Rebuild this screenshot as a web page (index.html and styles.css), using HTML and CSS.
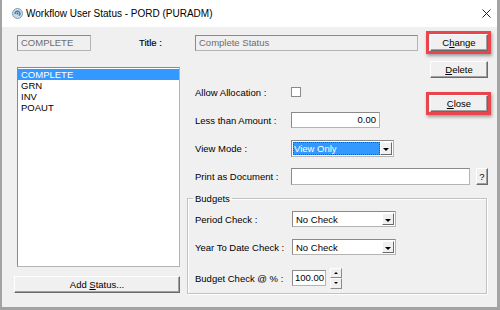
FILE: index.html
```html
<!DOCTYPE html>
<html lang="en">
<head>
    <meta charset="UTF-8">
    <title>Workflow User Status - PORD (PURADM)</title>
    <link rel="stylesheet" href="styles.css">
</head>
<body>

    <div class="window">
        <div class="titlebar">
            <svg class="app-icon" width="11" height="11" viewBox="0 0 11 11">
                <circle cx="5.5" cy="5.5" r="5" fill="#c9dbe8" stroke="#7e9cb4" stroke-width="1"/>
                <path d="M3.2 6.2 A2.4 2.4 0 1 1 6.8 7.6" fill="none" stroke="#3f6f98" stroke-width="1.2"/>
                <circle cx="5.5" cy="5.5" r="1" fill="#3f6f98"/>
            </svg>
            <span class="caption">Workflow User Status - PORD (PURADM)</span>
            <svg class="close-x" width="9" height="9" viewBox="0 0 9 9">
                <path d="M0.5 0.5 L8.5 8.5 M8.5 0.5 L0.5 8.5" stroke="#222" stroke-width="1"/>
            </svg>
        </div>

        <div class="client">
            <div class="top-row">
                <div class="field disabled code-field">COMPLETE</div>
                <span class="title-label">Title :</span>
                <div class="field disabled title-field">Complete Status</div>
                <div class="marked">
                    <button class="btn side-btn">C<u>h</u>ange</button>
                </div>
            </div>

            <div class="main">
                <div class="left">
                    <div class="listbox">
                        <div class="item selected">COMPLETE</div>
                        <div class="item">GRN</div>
                        <div class="item">INV</div>
                        <div class="item">POAUT</div>
                    </div>
                    <button class="btn add-btn">Add <u>S</u>tatus...</button>
                </div>

                <div class="right">
                    <div class="upper">
                        <div class="form">
                            <div class="row">
                                <span class="lbl">Allow Allocation :</span>
                                <span class="checkbox"></span>
                            </div>
                            <div class="row">
                                <span class="lbl">Less than Amount :</span>
                                <div class="field amount-field">0.00</div>
                            </div>
                            <div class="row">
                                <span class="lbl">View Mode :</span>
                                <div class="combo view-combo">
                                    <div class="combo-text focused"><span>View Only</span></div>
                                    <span class="drop"></span>
                                </div>
                            </div>
                        </div>
                        <div class="side">
                            <button class="btn side-btn"><u>D</u>elete</button>
                            <div class="marked close-mark">
                                <button class="btn side-btn"><u>C</u>lose</button>
                            </div>
                        </div>
                    </div>

                    <div class="row">
                        <span class="lbl">Print as Document :</span>
                        <div class="field print-field"></div>
                        <button class="btn help-btn">?</button>
                    </div>

                    <fieldset class="group">
                        <legend>Budgets</legend>
                        <div class="row">
                            <span class="lbl wide">Period Check :</span>
                            <div class="combo check-combo">
                                <div class="combo-text">No Check</div>
                                <span class="drop"></span>
                            </div>
                        </div>
                        <div class="row">
                            <span class="lbl wide">Year To Date Check :</span>
                            <div class="combo check-combo">
                                <div class="combo-text">No Check</div>
                                <span class="drop"></span>
                            </div>
                        </div>
                        <div class="row pct-row">
                            <span class="lbl wide">Budget Check @ % :</span>
                            <div class="field pct-field">100.00</div>
                            <div class="spinner">
                                <span class="spin up"></span>
                                <span class="spin down"></span>
                            </div>
                        </div>
                    </fieldset>
                </div>
            </div>
        </div>
    </div>

</body>
</html>
```

FILE: styles.css
```css
body {
    margin: 0;
    font-family: "Liberation Sans", Arial, sans-serif;
    font-size: 9.5px;
    color: #000;
    background: #a3a3a3;
}

.window {
    width: 500px;
    height: 310px;
    box-sizing: border-box;
    border-left: 2px solid #a3a3a3;
    border-right: 3px solid #a3a3a3;
    border-bottom: 3px solid #a3a3a3;
    background: #f0f0f0;
    display: flex;
    flex-direction: column;
}

/* title bar */
.titlebar {
    height: 27px;
    flex-shrink: 0;
    background: #fff;
    display: flex;
    align-items: center;
    padding-left: 10px;
}

.app-icon {
    margin-right: 3px;
}

.caption {
    font-size: 10px;
    color: #000;
}

.close-x {
    margin-left: auto;
    margin-right: 6px;
}

/* client area */
.client {
    flex: 1;
    padding: 7px 9px 0 12px;
}

.top-row {
    display: flex;
    align-items: center;
    height: 17px;
}

.field {
    box-sizing: border-box;
    height: 16px;
    line-height: 14px;
    padding: 0 3px;
    background: #fff;
    border: 1px solid #b4b4b4;
    border-top-color: #8a8a8a;
    border-left-color: #8a8a8a;
    white-space: nowrap;
}

.field.disabled {
    background: #f0f0f0;
    color: #6d6d6d;
}

.code-field {
    width: 74px;
    margin-left: 3px;
}

.title-label {
    width: 56px;
    margin-left: 48px;
    -webkit-text-stroke: 0.15px #000;
}

.title-field {
    width: 223px;
}

.marked {
    position: relative;
    margin-left: 12px;
}

.marked::after {
    content: "";
    position: absolute;
    left: -4px;
    top: -3px;
    right: -3px;
    bottom: -3px;
    border: 3px solid #e8464c;
    box-shadow: 1px 2px 3px rgba(0, 0, 0, 0.35);
}

/* buttons */
.btn {
    box-sizing: border-box;
    margin: 0;
    padding: 0;
    font-family: inherit;
    font-size: 9.5px;
    color: #000;
    background: #f0f0f0;
    border: 1px solid;
    border-color: #fff #6a6a6a #6a6a6a #fff;
    box-shadow: inset -1px -1px 0 #a0a0a0;
    cursor: pointer;
}

.side-btn {
    display: block;
    width: 58px;
    height: 17px;
}

.add-btn {
    width: 166px;
    height: 17px;
    margin-top: 9px;
}

.help-btn {
    width: 12px;
    height: 17px;
    margin-left: 6px;
}

/* main area */
.main {
    display: flex;
}

.left {
    width: 166px;
    padding-top: 16px;
}

.listbox {
    box-sizing: border-box;
    width: 163px;
    height: 200px;
    margin-left: 3px;
    background: #fff;
    border: 1px solid #b4b4b4;
    border-top-color: #8a8a8a;
    border-left-color: #8a8a8a;
    padding-top: 1px;
}

.item {
    height: 11px;
    line-height: 11px;
    padding-left: 3px;
}

.item.selected {
    background: #3399ff;
    color: #fff;
}

.right {
    width: 301px;
    margin-left: 7px;
}

.upper {
    display: flex;
}

.form {
    width: 243px;
    padding-top: 27px;
}

.side {
    padding-top: 10px;
}

.close-mark {
    margin-left: 0;
    margin-top: 17px;
}

.row {
    display: flex;
    align-items: center;
    height: 28px;
    padding-left: 8px;
}

.lbl {
    width: 96px;
    flex-shrink: 0;
    white-space: nowrap;
}

.lbl.wide {
    width: 97px;
}

.checkbox {
    box-sizing: border-box;
    width: 10px;
    height: 10px;
    background: #fff;
    border: 1px solid #8a8a8a;
}

.amount-field {
    width: 89px;
    text-align: right;
}

.print-field {
    width: 179px;
    height: 17px;
}

/* combo boxes */
.combo {
    box-sizing: border-box;
    display: flex;
    height: 17px;
    background: #fff;
    border: 1px solid #b4b4b4;
    border-top-color: #8a8a8a;
    border-left-color: #8a8a8a;
    padding: 1px;
}

.combo-text {
    flex: 1;
    line-height: 13px;
    padding-left: 2px;
    white-space: nowrap;
}

.combo-text.focused {
    background: #3399ff;
    color: #fff;
    outline: 1px dotted #6b4a1f;
    outline-offset: -1px;
    padding-left: 1px;
}

.drop {
    position: relative;
    box-sizing: border-box;
    width: 12px;
    background: #f0f0f0;
    border: 1px solid;
    border-color: #fff #6a6a6a #6a6a6a #fff;
}

.drop::after {
    content: "";
    position: absolute;
    left: 2px;
    top: 5px;
    border-left: 3px solid transparent;
    border-right: 3px solid transparent;
    border-top: 3px solid #000;
}

.view-combo {
    width: 103px;
}

.check-combo {
    width: 104px;
    height: 16px;
}

/* budgets group */
.group {
    margin: 3px 0 0;
    padding: 1px 0 1px 7px;
    width: 300px;
    box-sizing: border-box;
    border: 1px solid #c2c2c2;
    box-shadow: inset 1px 1px 0 #fff, 1px 1px 0 #fff;
}

.group legend {
    padding: 0 2px;
    margin-left: -2px;
    line-height: 11px;
}

.group .row {
    padding-left: 0;
}

.pct-row {
    margin-top: 3px;
}

.pct-field {
    width: 34px;
    padding: 0 2px;
}

.spinner {
    display: flex;
    flex-direction: column;
    margin-left: 4px;
    width: 12px;
    height: 21px;
}

.spin {
    position: relative;
    flex: 1;
    box-sizing: border-box;
    background: #f0f0f0;
    border: 1px solid;
    border-color: #fff #8a8a8a #8a8a8a #fff;
}

.spin::after {
    content: "";
    position: absolute;
    left: 3px;
    top: 3px;
    border-left: 2px solid transparent;
    border-right: 2px solid transparent;
}

.spin.up::after {
    border-bottom: 2px solid #000;
}

.spin.down::after {
    border-top: 2px solid #000;
}
```
